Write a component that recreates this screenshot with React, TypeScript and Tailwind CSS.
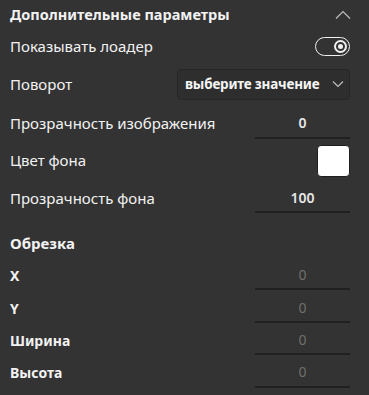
import React from "react";

const font = { fontFamily: '"Noto Sans", "Open Sans", sans-serif' };

function Field({ value, muted }: { value: string; muted?: boolean }) {
  return (
    <div
      className={`w-[95px] h-[30px] flex items-center justify-center border-b-2 border-[#202020] text-[14px] ${
        muted ? "text-[#6f6f6f]" : "text-[#e8e8e8] font-semibold"
      }`}
    >
      {value}
    </div>
  );
}

function Row({ label, h, children, bold, size }: { label: string; h: string; children?: React.ReactNode; bold?: boolean; size?: string }) {
  return (
    <div className={`flex items-center justify-between ${h}`}>
      <span className={`${size ?? "text-[15px]"} text-[#f2f2f2] ${bold ? "font-bold" : ""}`}>{label}</span>
      {children}
    </div>
  );
}

export default function App() {
  return (
    <div className="w-[369px] h-[395px] bg-[#333333] pl-[10px] pr-[19px] overflow-hidden" style={font}>
      <div className="flex items-center justify-between h-[29px]">
        <span className="text-[14.5px] font-bold text-[#f2f2f2]">Дополнительные параметры</span>
        <svg width="16" height="10" viewBox="0 0 16 10" className="mr-[-1px]">
          <path d="M1 8.5 L8 1.5 L15 8.5" fill="none" stroke="#bdbdbd" strokeWidth="1.2" />
        </svg>
      </div>
      <Row label="Показывать лоадер" h="h-[35px]">
        <div className="w-[35px] h-[19px] rounded-full border-[1.5px] border-[#f0f0f0] flex items-center justify-end pr-[2px]">
          <div className="w-[13px] h-[13px] rounded-full border-2 border-[#f0f0f0] flex items-center justify-center">
            <div className="w-[5px] h-[5px] rounded-full bg-[#f0f0f0]" />
          </div>
        </div>
      </Row>
      <Row label="Поворот" h="h-[40px]">
        <div className="w-[173px] h-[31px] rounded-[4px] border border-[#262626] bg-[#2e2e2e] flex items-center justify-between pl-[7px] pr-[5px]">
          <span className="text-[13.5px] font-bold text-[#f5f5f5] tracking-[-0.2px]">выберите значение</span>
          <svg width="12" height="8" viewBox="0 0 12 8">
            <path d="M1 1.5 L6 6.5 L11 1.5" fill="none" stroke="#bdbdbd" strokeWidth="1.2" />
          </svg>
        </div>
      </Row>
      <Row label="Прозрачность изображения" h="h-[39px]">
        <Field value="0" />
      </Row>
      <Row label="Цвет фона" h="h-[35px]">
        <div className="w-[33px] h-[32px] rounded-[4px] bg-white border border-[#1f1f1f]" />
      </Row>
      <Row label="Прозрачность фона" h="h-[40px]">
        <Field value="100" />
      </Row>
      <div className="h-[10px]" />
      <Row label="Обрезка" h="h-[30px]" bold />
      <Row label="X" h="h-[34px]" bold size="text-[14px]">
        <Field value="0" muted />
      </Row>
      <Row label="Y" h="h-[32px]" bold size="text-[14px]">
        <Field value="0" muted />
      </Row>
      <Row label="Ширина" h="h-[32px]" bold size="text-[14px]">
        <Field value="0" muted />
      </Row>
      <Row label="Высота" h="h-[33px]" bold size="text-[14px]">
        <Field value="0" muted />
      </Row>
    </div>
  );
}
